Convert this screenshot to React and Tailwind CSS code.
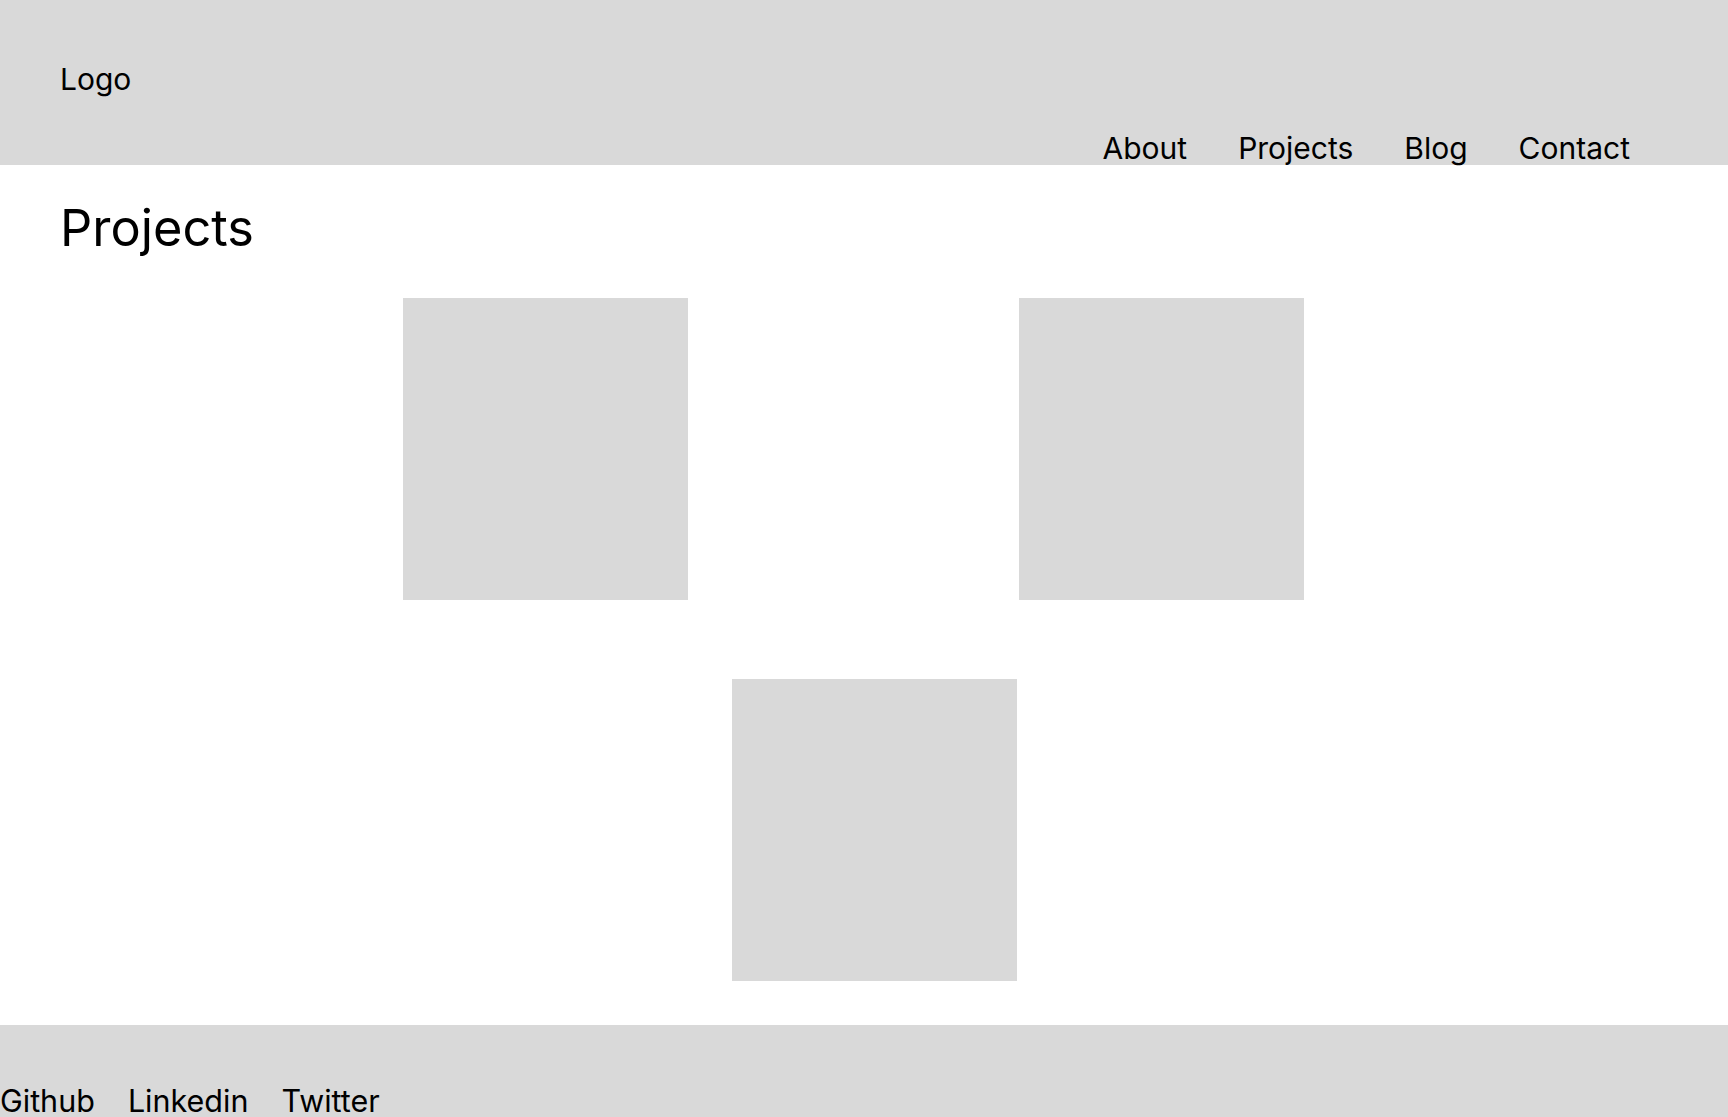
export default function App() {
  const font = { fontFamily: 'Inter, "Noto Sans", sans-serif' };
  return (
    <div className="w-[1728px] min-h-[1117px] bg-white text-black" style={font}>
      <header className="h-[165px] bg-[#d9d9d9] flex justify-between pl-[60px] pr-[98px]">
        <div className="pt-[62px] text-[30px] leading-[35px]">Logo</div>
        <nav className="self-end flex gap-[51px] text-[30px] leading-[33px]">
          <span>About</span>
          <span>Projects</span>
          <span>Blog</span>
          <span>Contact</span>
        </nav>
      </header>
      <main className="pt-[33px]">
        <h1 className="pl-[60px] text-[50.5px] leading-[60px] font-normal">Projects</h1>
        <div className="mt-[40px] flex pl-[403px] gap-[331px]">
          <div className="w-[285px] h-[302px] bg-[#d9d9d9]" />
          <div className="w-[285px] h-[302px] bg-[#d9d9d9]" />
        </div>
        <div className="mt-[79px] flex pl-[732px]">
          <div className="w-[285px] h-[302px] bg-[#d9d9d9]" />
        </div>
      </main>
      <footer className="mt-[44px] h-[93px] bg-[#d9d9d9] flex items-end gap-[33px] text-[30.5px] leading-[35px]">
        <span>Github</span>
        <span>Linkedin</span>
        <span>Twitter</span>
      </footer>
    </div>
  );
}
